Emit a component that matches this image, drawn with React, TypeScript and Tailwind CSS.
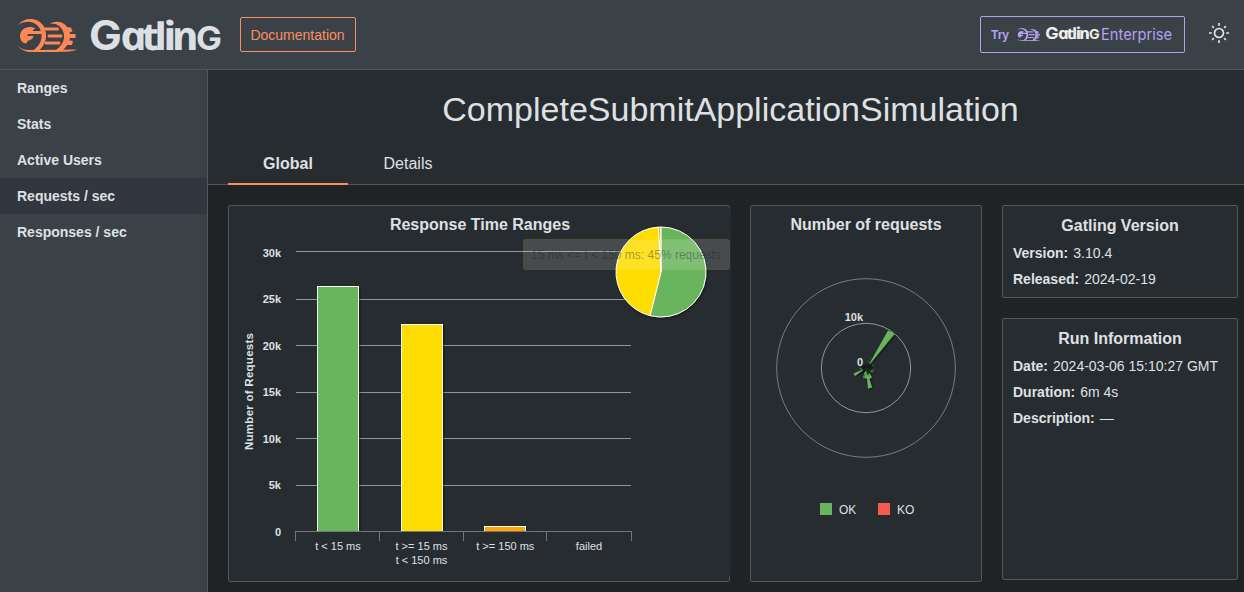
import React from "react";

const NAV = ["Ranges", "Stats", "Active Users", "Requests / sec", "Responses / sec"];

function EmblemPaths() {
  return (
    <>
      <path d="M18 25 C25 16.500 38 17.500 43.500 26 C48.500 35 46 45 38.500 51 L32.500 51 C41.500 45 43.500 36 40 29 C35.500 21 26 19.500 18 25Z" />
      <path d="M50 24 C55 20.500 63 21 67.500 27.500 C72.500 35 70 44 62 51 L54 51 C64 46 66 36.500 62.500 30 C59.500 24.800 55 23.200 50 24Z" />
      <path d="M17.500 45 C21 49.500 26 50.500 32 50 L77 49.500 C72 52.300 60 51.800 48 52 L30 52 C24 51.500 20 49 17.500 45Z" />
      <path d="M35.500 28.500 C28 24.500 20 29 20 36 C20 40.500 23 43.500 26.500 43.500 C26.500 41.500 28 40.500 30 40 C32 39.300 33.500 38 33.500 36 H27.500 C27 34.500 28 34 29.500 34 H43 V31 H32.500 C33 29.500 34.500 29 35.500 28.500Z" />
      <path d="M43 27.500 H57.500 a1.500 1.500 0 0 1 0 3 H44Z M49 34.500 H61 a1.500 1.500 0 0 1 0 3 H49 a1.500 1.500 0 0 1 0 -3Z M46 41.500 H59 a1.500 1.500 0 0 1 0 3 H46 a1.500 1.500 0 0 1 0 -3Z" />
      <path d="M66 27 L71 27.500 L72.500 31.500 L67 33Z M68 34 H75.500 V38 H68Z M67 40 L73 41 L72 45 L66 45Z" />
    </>
  );
}

function Wordmark() {
  return (
    <>
      <text x="82.500" y="50.300" transform="scale(1.080 1)" className="font-['Inter'] text-[40.500px] font-bold">G</text>
      <text
        y="50"
        transform="translate(-11.900 0) skewX(13.400) scale(1.120 1)"
        className="font-['Open_Sans'] text-[40px] font-bold italic"
      >
        <tspan x="109.500">a</tspan>
        <tspan x="128.500" className="text-[38px]">t</tspan>
        <tspan x="140" className="text-[38px]">l</tspan>
        <tspan x="148">i</tspan>
        <tspan x="155.500">n</tspan>
      </text>
      <text x="181.500" y="50" transform="scale(1.080 1)" className="font-['Inter'] text-[32px] font-bold">G</text>
    </>
  );
}

function Header() {
  return (
    <header className="flex h-[70px] shrink-0 items-center border-b border-[#555657] bg-[#3a4147]">
      <svg width="224" height="69" viewBox="0 0 224 69" role="img">
        <g className="fill-[#fe8756]"><EmblemPaths /></g>
        <g className="fill-[#dcdfe4]"><Wordmark /></g>
      </svg>
      <a className="ml-4 flex h-[35px] w-[116px] items-center justify-center rounded-[2px] border border-[#fe8e62] pt-px text-[14px] text-[#fe8e62]">
        <span className="pr-px">Documentation</span>
      </a>
      <div className="flex-1" />
      <a className="flex h-[37px] w-[205px] items-center rounded-[2px] border border-[#b5a2ee] pl-2.5 text-[12px] font-bold text-[#b5a2ee]">
        <span className="w-5">Try</span>
        <svg width="166" height="24" viewBox="0 0 166 24" className="ml-1">
          <g transform="translate(-5.200 -2.700) scale(.4)" className="fill-[#b5a2ee]">
            <EmblemPaths />
          </g>
          <g transform="translate(-6.300 -4.300) scale(.41)" className="fill-[#eeeeee]">
            <Wordmark />
          </g>
          <text
            x="86"
            y="17"
            textLength="71"
            lengthAdjust="spacingAndGlyphs"
            className="fill-[#b5a2ee] font-['Inter'] text-[15.500px] font-normal"
          >
            Enterprise
          </text>
        </svg>
      </a>
      <svg width="24" height="24" viewBox="-12 -12 24 24" className="mr-[13px] mb-[3px] ml-[22px] fill-none stroke-[#e3e4e6] stroke-[1.700]">
        <circle r="4.500" />
        <path d="M0-10V-7.200M0 10V7.200M-10 0H-7.200M10 0H7.200M-6.800-6.800L-5.200-5.200M6.800-6.800L5.200-5.200M-6.800 6.800L-5.200 5.200M6.800 6.800L5.200 5.200" />
      </svg>
    </header>
  );
}

function Sidebar() {
  return (
    <nav className="w-[208px] shrink-0 border-r border-[#555657] bg-[#3a4147]">
      {NAV.map((label) => (
        <a
          key={label}
          className={
            "flex h-9 items-center pl-[17px] text-[14px] font-bold text-[#dfe0e4] " +
            (label === "Requests / sec" ? "bg-[#32363f]" : "")
          }
        >
          {label}
        </a>
      ))}
    </nav>
  );
}

const GRID = [
  { y: 251.5, base: 257, label: "30k" },
  { y: 299.5, base: 303, label: "25k" },
  { y: 345.5, base: 350, label: "20k" },
  { y: 392.5, base: 396, label: "15k" },
  { y: 438.5, base: 443, label: "10k" },
  { y: 485.5, base: 489, label: "5k" },
];

const BARS = [
  { x: 317, y: 286, fill: "fill-[#69b55d]" },
  { x: 401, y: 324, fill: "fill-[#ffdd00]" },
  { x: 484, y: 526, fill: "fill-[#ffa400]" },
];

function RangesChart() {
  return (
    <svg
      width="502"
      height="366"
      viewBox="229 211 502 366"
      className="relative mt-[5px] max-w-none shrink-0 overflow-visible font-['Liberation_Sans',sans-serif]"
    >
      <defs>
        <filter id="soft" x="-20%" y="-20%" width="140%" height="140%">
          <feDropShadow dx="1" dy="1" stdDeviation="1" floodColor="#000" floodOpacity=".55" />
        </filter>
      </defs>
      <rect x="229" y="208" width="502" height="369" rx="4" className="fill-[#272c30]" />
      <text x="480" y="230" textAnchor="middle" className="fill-[#dfe0e4] text-[16px] font-bold">
        Response Time Ranges
      </text>
      <text
        transform="translate(253 391.500) rotate(-90)"
        textAnchor="middle"
        className="fill-[#dfe0e4] text-[11.500px] font-bold"
        textLength="117"
      >
        Number of Requests
      </text>
      {GRID.map((g) => (
        <g key={g.label}>
          <path d={`M296 ${g.y}H631`} className="stroke-[#949799]" />
          <text x="281" y={g.base} textAnchor="end" className="fill-[#dfe0e4] text-[11px] font-bold">
            {g.label}
          </text>
        </g>
      ))}
      <text x="281" y="536" textAnchor="end" className="fill-[#dfe0e4] text-[11px] font-bold">0</text>
      {BARS.map((b) => (
        <g key={b.x} filter="url(#soft)">
          <rect x={b.x + 0.5} y={b.y + 0.5} width="41" height={531 - b.y} className={b.fill + " stroke-white"} />
        </g>
      ))}
      <rect x="296" y="532" width="335" height="3" className="fill-[#272c30]" />
      <path d="M295 531.500H632M295.500 531V541M379.500 531V541M463.500 531V541M546.500 531V541M631.500 531V541" className="fill-none stroke-[#75787a]" />
      <g textAnchor="middle" className="fill-[#dfe0e4] text-[11px]">
        <text x="338" y="550">t &lt; 15 ms</text>
        <text x="421.500" y="550">t &gt;= 15 ms</text>
        <text x="421.500" y="564">t &lt; 150 ms</text>
        <text x="505.300" y="550">t &gt;= 150 ms</text>
        <text x="589" y="550">failed</text>
      </g>
      <g filter="url(#soft)" className="stroke-white stroke-1" strokeLinejoin="round">
        <path d="M661 272V227A45 45 0 1 1 650 315.640Z" className="fill-[#69b55d]" />
        <path d="M661 272L650 315.640A45 45 0 0 1 658.400 227.080Z" className="fill-[#ffdd00]" />
        <path d="M661 272L658.400 227.080A45 45 0 0 1 660.700 227Z" className="fill-[#ffa400]" />
      </g>
      <rect x="523.500" y="239.500" width="206" height="30" rx="2" className="fill-white/15 stroke-[#ffdd00]/12" />
      <text x="531" y="259" textLength="190" className="fill-[#1c1c1c]/40 text-[12px]">
        15 ms &lt;= t &lt; 150 ms: 45% requests
      </text>
    </svg>
  );
}

function RequestsChart() {
  return (
    <svg width="230" height="366" viewBox="751 211 230 366" className="mt-[5px] font-['Liberation_Sans',sans-serif]">
      <text x="866" y="230" textAnchor="middle" className="fill-[#dfe0e4] text-[16px] font-bold">
        Number of requests
      </text>
      <circle cx="866" cy="368" r="44.700" className="fill-none stroke-[#949799]" />
      <circle cx="866" cy="368" r="89.300" className="fill-none stroke-[#7a7c7e]" />
      <g filter="url(#soft)" className="fill-[#69b55d]">
        <path d="M867.500 367L888 330.500Q892.500 331.500 894.500 334Z" />
        <path d="M866 368L853.500 373.500L855 376Z" />
        <path d="M866 368L868 388.500L872 387.500Z" />
        <path d="M866 368L863 378L867 378.500Z" />
        <path d="M866 368L869 379L872 377.500Z" />
        <path d="M866 368L872 372.500L874 370Z" />
      </g>
      <g className="fill-[#101611]">
        <path d="M861 367l3-3 3 1 2-4 1 4 4 0-2 4 2 3-4-1-2 5-2-5-4 3 1-4Z" className="opacity-80" />
      </g>
      <path d="M868 361l2 3M859 368l3 1M872 366l2-1M865 374l-1 4M871 370l3 2" className="stroke-[#3c7437]" />
      <g textAnchor="end" className="fill-[#dfe0e4] text-[11px] font-bold">
        <text x="863" y="321">10k</text>
        <text x="863" y="366">0</text>
      </g>
      <rect x="820" y="503" width="12" height="12" className="fill-[#69b55d]" />
      <rect x="878" y="503" width="12" height="12" className="fill-[#f65b4f]" />
      <g className="fill-[#dfe0e4] text-[12px]">
        <text x="839" y="514">OK</text>
        <text x="897" y="514">KO</text>
      </g>
    </svg>
  );
}

function Info({ title, rows, className }: { title: string; rows: string[][]; className: string }) {
  return (
    <section className={"rounded-[2px] border border-[#555657] bg-[#272c30] px-2.5 pt-[9px] text-[14px] text-[#dfe0e4] " + className}>
      <h2 className="mb-[3px] text-center text-[16px] leading-[22px] font-bold">{title}</h2>
      {rows.map(([k, v]) => (
        <div key={k} className="flex h-[26px] items-center gap-[5px]">
          <span className="font-bold">{k}:</span>
          <span>{v}</span>
        </div>
      ))}
    </section>
  );
}

export default function App() {
  return (
    <div className="flex h-[592px] w-[1244px] flex-col overflow-hidden bg-[#1f2326] font-['Liberation_Sans',sans-serif] text-[#dfe0e4]">
      <Header />
      <div className="flex min-h-0 flex-1">
        <Sidebar />
        <main className="min-w-0 flex-1">
          <div className="flex h-[115px] flex-col border-b border-[#555657] bg-[#272c30]">
            <h1 className="pt-[19px] pl-[9px] text-center text-[34px] leading-[40px]">CompleteSubmitApplicationSimulation</h1>
            <div className="mt-auto -mb-px ml-5 flex">
              <a className="flex h-[43px] w-[120px] items-start justify-center border-b-2 border-[#fe8e62] text-[16px] leading-6 font-bold">
                <span className="pt-2.5">Global</span>
              </a>
              <a className="flex h-[43px] w-[120px] items-start justify-center text-[16px] leading-6">
                <span className="pt-2.5">Details</span>
              </a>
            </div>
          </div>
          <div className="flex items-start gap-5 pt-5 pl-5">
            <section className="flex h-[377px] w-[502px] items-start rounded-[2px] border border-[#555657] bg-[#272c30]">
              <RangesChart />
            </section>
            <section className="h-[377px] w-[232px] rounded-[2px] border border-[#555657] bg-[#272c30]">
              <RequestsChart />
            </section>
            <div className="flex flex-col gap-5">
              <Info
                className="h-[93px] w-[236px]"
                title="Gatling Version"
                rows={[["Version", "3.10.4"], ["Released", "2024-02-19"]]}
              />
              <Info
                className="h-[262px] w-[236px]"
                title="Run Information"
                rows={[["Date", "2024-03-06 15:10:27 GMT"], ["Duration", "6m 4s"], ["Description", "—"]]}
              />
            </div>
          </div>
        </main>
      </div>
    </div>
  );
}
